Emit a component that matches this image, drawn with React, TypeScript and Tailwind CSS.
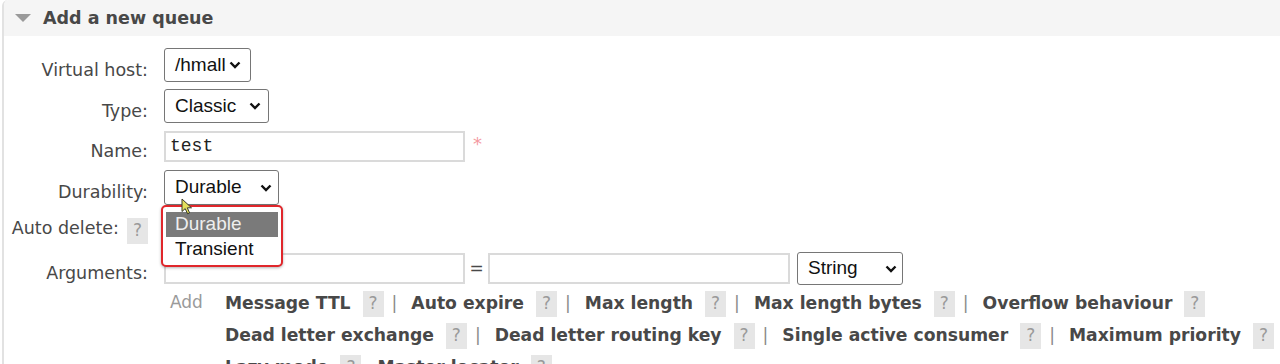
import { Fragment } from "react";

const Chevron = () => (
  <svg width="12" height="8" viewBox="0 0 12 8" className="shrink-0">
    <path d="M1.5 1.5 L6 6 L10.5 1.5" stroke="#111" strokeWidth="2.4" fill="none" />
  </svg>
);

type SelectProps = { value: string; className: string };

// looks like the native select of the management page
const FakeSelect = ({ value, className }: SelectProps) => (
  <div
    className={`flex items-center justify-between rounded-[3px] border border-[#767676] bg-white pl-[10px] font-['Liberation_Sans',Arial,sans-serif] text-[19px] text-[#111] ${className}`}
  >
    <span>{value}</span>
    <Chevron />
  </div>
);

const Help = () => (
  <span className="flex h-[26px] w-[21px] shrink-0 items-center justify-center bg-[#e6e6e6] text-[17px] font-normal text-[#9a9a9a]">
    ?
  </span>
);

const Label = ({ text }: { text: string }) => (
  <div className="w-[144px] shrink-0 pt-[10px] text-right">{text}</div>
);

const argLines = [
  { sep: true, items: ["Message TTL", "Auto expire", "Max length", "Max length bytes", "Overflow behaviour"] },
  { sep: true, items: ["Dead letter exchange", "Dead letter routing key", "Single active consumer", "Maximum priority"] },
  { sep: false, items: ["Lazy mode", "Master locator"] },
];

const App = () => {
  return (
    <div className="h-[364px] w-[1280px] overflow-hidden bg-white font-['DejaVu_Sans',Verdana,sans-serif] text-[17.5px] text-[#484848]">
      <div className="ml-[2px] h-full rounded-tl-[6px] border-l-2 border-[#e2e2e2]">
        {/* header */}
        <div className="flex h-[36px] items-center rounded-tl-[5px] bg-[#f5f5f5] pl-[11px]">
          <svg width="16" height="8" viewBox="0 0 16 8">
            <path d="M0 0 L16 0 L8 8 Z" fill="#9a9a9a" />
          </svg>
          <span className="ml-[12px] font-bold">Add a new queue</span>
        </div>

        {/* Virtual host */}
        <div className="mt-[12px] flex h-[34px] items-center">
          <Label text="Virtual host:" />
          <div className="ml-[16px] h-full">
            <FakeSelect value="/hmall" className="h-full w-[87px] pr-[9px]" />
          </div>
        </div>

        {/* Type */}
        <div className="mt-[7px] flex h-[34px] items-center">
          <Label text="Type:" />
          <div className="ml-[16px] h-full">
            <FakeSelect value="Classic" className="h-full w-[105px] pr-[7px]" />
          </div>
        </div>

        {/* Name */}
        <div className="mt-[8px] flex h-[31px] items-center">
          <Label text="Name:" />
          <div className="ml-[16px] flex h-full w-[301px] items-center border-2 border-[#dadada] pl-[4px] font-['Liberation_Mono','Courier_New',monospace] text-[18px] text-[#222]">
            test
          </div>
          <span className="mb-[6px] ml-[8px] text-[18px] text-[#f49aa2]">*</span>
        </div>

        {/* Durability */}
        <div className="mt-[8px] flex h-[35px] items-center">
          <Label text="Durability:" />
          <div className="relative ml-[16px] h-full">
            <FakeSelect value="Durable" className="h-full w-[115px] pr-[6px]" />
            <div className="absolute left-[-3px] top-[35px] z-10 w-[122px] rounded-[5px] border-2 border-[#e0262b] bg-white px-[3px] pb-[4px] pt-[5px] font-['Liberation_Sans',Arial,sans-serif] text-[19px] shadow-[0_1px_3px_rgba(0,0,0,0.3)]">
              <div className="flex h-[25px] items-center bg-[#7a7a7a] pl-[9px] text-[#eeeeee]">Durable</div>
              <div className="flex h-[24px] items-center pl-[9px] text-[#111]">Transient</div>
            </div>
            <svg
              width="12"
              height="17"
              viewBox="0 0 12 17"
              className="absolute left-[17px] top-[28px] z-20"
            >
              <path
                d="M1 1 L1 13.5 L4.2 10.6 L6.6 15.8 L8.6 14.9 L6.3 9.8 L10.5 9.8 Z"
                fill="#e2df5c"
                stroke="#3a3a2a"
                strokeWidth="1"
                strokeLinejoin="round"
              />
            </svg>
          </div>
        </div>

        {/* Auto delete */}
        <div className="mt-[7px] flex h-[34px] items-center">
          <div className="flex w-[144px] shrink-0 items-center justify-end gap-[8px] pt-[3px]">
            <span className="pb-[4px]">Auto delete:</span>
            <Help />
          </div>
          <div className="ml-[16px] h-full">
            <FakeSelect value="No" className="h-full w-[60px] pr-[6px]" />
          </div>
        </div>

        {/* Arguments */}
        <div className="mt-[6px] flex h-[33px] items-center">
          <Label text="Arguments:" />
          <div className="ml-[16px] h-[31px] w-[301px] border-2 border-[#dadada] bg-white" />
          <span className="w-[23px] text-center text-[17px]">=</span>
          <div className="h-[31px] w-[302px] border-2 border-[#dadada]" />
          <div className="ml-[7px] h-full">
            <FakeSelect value="String" className="h-full w-[106px] pr-[5px]" />
          </div>
        </div>

        {/* argument shortcuts */}
        <div className="mt-[3px] flex">
          <div className="w-[166px] shrink-0" />
          <div className="w-[55px] shrink-0 pt-[2px] text-[17px] text-[#9a9a9a]">Add</div>
          <div className="flex flex-col">
            {argLines.map((line, li) => (
              <div key={li} className="flex h-[32px] items-center whitespace-nowrap text-[17.2px]">
                {line.items.map((item, i) => (
                  <Fragment key={item}>
                    {i > 0 && line.sep && (
                      <span className="ml-[8px] mr-[14px] font-normal text-[#8a8a8a]">|</span>
                    )}
                    <span className={`font-bold ${i > 0 && !line.sep ? "ml-[16px]" : ""}`}>{item}</span>
                    <span className="ml-[12px]">
                      <Help />
                    </span>
                  </Fragment>
                ))}
              </div>
            ))}
          </div>
        </div>
      </div>
    </div>
  );
};

export default App;
